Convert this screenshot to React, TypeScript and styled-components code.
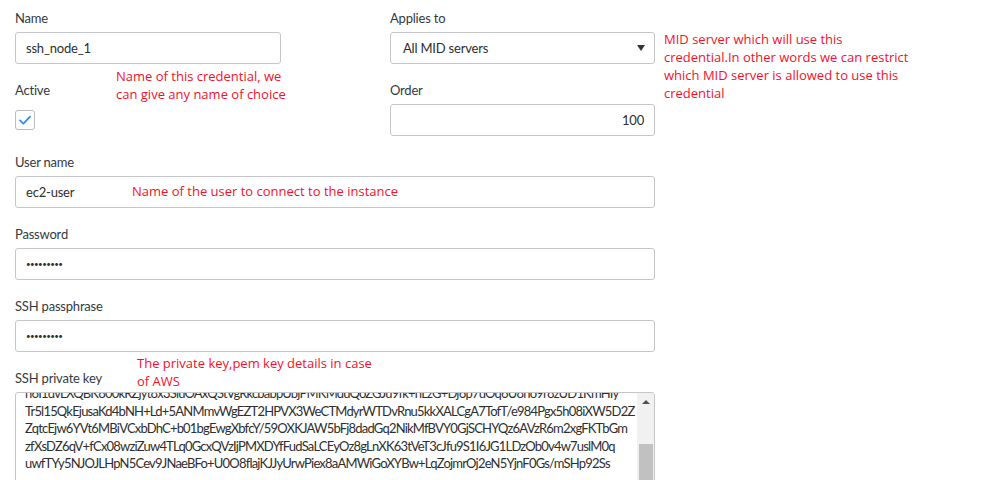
import React from "react";
import styled, { createGlobalStyle } from "styled-components";

const GlobalStyle = createGlobalStyle`
  html, body {
    margin: 0;
    padding: 0;
    background: #fff;
  }
  body {
    font-family: Lato, "Liberation Sans", sans-serif;
    overflow: hidden;
  }
`;

const keyLines = [
  "h6I1dvLXQBK800kRZjyt8x3SluOAxQStVgRkcbabpUbjPMKMduQoZGJu9fk+nLzG+Dj6p7uOq6U8no9r8zUD1KmHIy",
  "Tr5l15QkEjusaKd4bNH+Ld+5ANMmvWgEZT2HPVX3WeCTMdyrWTDvRnu5kkXALCgA7TofT/e984Pgx5h08iXW5D2Z",
  "ZqtcEjw6YVt6MBiVCxbDhC+b01bgEwgXbfcY/59OXKJAW5bFj8dadGq2NikMfBVY0GjSCHYQz6AVzR6m2xgFKTbGm",
  "zfXsDZ6qV+fCx08wziZuw4TLq0GcxQVzIjPMXDYfFudSaLCEyOz8gLnXK63tVeT3cJfu9S1I6JG1LDzOb0v4w7uslM0q",
  "uwfTYy5NJOJLHpN5Cev9JNaeBFo+U0O8flajKJJyUrwPiex8aAMWiGoXYBw+LqZojmrOj2eN5YjnF0Gs/mSHp92Ss",
];

export default function App() {
  return (
    <>
      <GlobalStyle />
      <Form>
        <TopGrid>
          <Field>
            <Label>Name</Label>
            <Box>ssh_node_1</Box>
          </Field>
          <Field>
            <Label>Applies to</Label>
            <SelectBox>
              <span>All MID servers</span>
              <Caret />
            </SelectBox>
          </Field>
          <Field>
            <Label>Active</Label>
            <CheckRow>
              <Checkbox>
                <svg width="14" height="14" viewBox="0 0 14 14">
                  <path
                    d="M2 7.4 L5.4 10.6 L12 3.6"
                    fill="none"
                    stroke="#2d8cf8"
                    strokeWidth="1.8"
                    strokeLinecap="round"
                    strokeLinejoin="round"
                  />
                </svg>
              </Checkbox>
            </CheckRow>
          </Field>
          <Field>
            <Label>Order</Label>
            <Box $align="right">100</Box>
          </Field>
        </TopGrid>

        <Field>
          <Label>User name</Label>
          <Box>ec2-user</Box>
        </Field>
        <Field>
          <Label>Password</Label>
          <Box>
            <Dots>•••••••••</Dots>
          </Box>
        </Field>
        <Field>
          <Label>SSH passphrase</Label>
          <Box>
            <Dots>•••••••••</Dots>
          </Box>
        </Field>
        <Field>
          <Label>SSH private key</Label>
          <TextArea>
            <KeyText>
              {keyLines.map((l) => (
                <div key={l}>{l}</div>
              ))}
            </KeyText>
            <ScrollBar>
              <ArrowUp />
              <Thumb />
            </ScrollBar>
          </TextArea>
        </Field>

        <Note $top={67} $left={116}>
          Name of this credential, we
          <br />
          can give any name of choice
        </Note>
        <Note $top={30} $left={664}>
          MID server which will use this
          <br />
          credential.In other words we can restrict
          <br />
          which MID server is allowed to use this
          <br />
          credential
        </Note>
        <Note $top={182} $left={132}>
          Name of the user to connect to the instance
        </Note>
        <Note $top={354} $left={137}>
          The private key,pem key details in case
          <br />
          of AWS
        </Note>
      </Form>
    </>
  );
}

const Form = styled.div`
  position: relative;
  width: 640px;
  padding: 8px 0 0 15px;
  display: flex;
  flex-direction: column;
  gap: 16px;
`;

const TopGrid = styled.div`
  display: grid;
  grid-template-columns: 266px 265px;
  column-gap: 109px;
  row-gap: 16px;
`;

const Field = styled.div`
  display: flex;
  flex-direction: column;
  gap: 4px;
`;

const Label = styled.div`
  height: 20px;
  line-height: 20px;
  font-size: 13px;
  letter-spacing: -0.2px;
  color: #343a40;
`;

const Box = styled.div<{ $align?: "left" | "right" }>`
  box-sizing: border-box;
  height: 32px;
  padding: 0 10px;
  border: 1px solid #c4c6c9;
  border-radius: 3px;
  display: flex;
  align-items: center;
  justify-content: ${(p) => (p.$align === "right" ? "flex-end" : "flex-start")};
  font-size: 13px;
  letter-spacing: -0.2px;
  color: #2e2e2e;
  background: #fff;
`;

const SelectBox = styled(Box)`
  justify-content: space-between;
  padding: 0 9px 0 12px;
`;

const Caret = styled.div`
  width: 0;
  height: 0;
  border-left: 4px solid transparent;
  border-right: 4px solid transparent;
  border-top: 6px solid #333;
`;

const Dots = styled.span`
  font-size: 8px;
  letter-spacing: -0.6px;
  color: #333;
`;

const CheckRow = styled.div`
  height: 32px;
  display: flex;
  align-items: center;
`;

const Checkbox = styled.div`
  box-sizing: border-box;
  width: 20px;
  height: 20px;
  border: 1px solid #b8bbbf;
  border-radius: 3px;
  display: flex;
  align-items: center;
  justify-content: center;
`;

const TextArea = styled.div`
  box-sizing: border-box;
  height: 110px;
  border: 1px solid #c4c6c9;
  border-radius: 3px;
  display: flex;
  overflow: hidden;
`;

const KeyText = styled.div`
  flex: 1;
  margin-top: -8px;
  padding-left: 9px;
  font-size: 13px;
  letter-spacing: -0.8px;
  line-height: 17.5px;
  color: #2e2e2e;
  white-space: nowrap;
  overflow: hidden;
`;

const ScrollBar = styled.div`
  width: 17px;
  display: flex;
  flex-direction: column;
  align-items: center;
  background: #f1f1f1;
`;

const ArrowUp = styled.div`
  margin-top: 7px;
  width: 0;
  height: 0;
  border-left: 4px solid transparent;
  border-right: 4px solid transparent;
  border-bottom: 4px solid #505050;
`;

const Thumb = styled.div`
  margin-top: 40px;
  width: 14px;
  height: 60px;
  background: #c1c1c1;
`;

const Note = styled.div<{ $top: number; $left: number }>`
  position: absolute;
  top: ${(p) => p.$top}px;
  left: ${(p) => p.$left}px;
  font-family: "Open Sans", "Liberation Sans", sans-serif;
  font-size: 13px;
  line-height: 18px;
  color: #f5102a;
  white-space: nowrap;
`;
